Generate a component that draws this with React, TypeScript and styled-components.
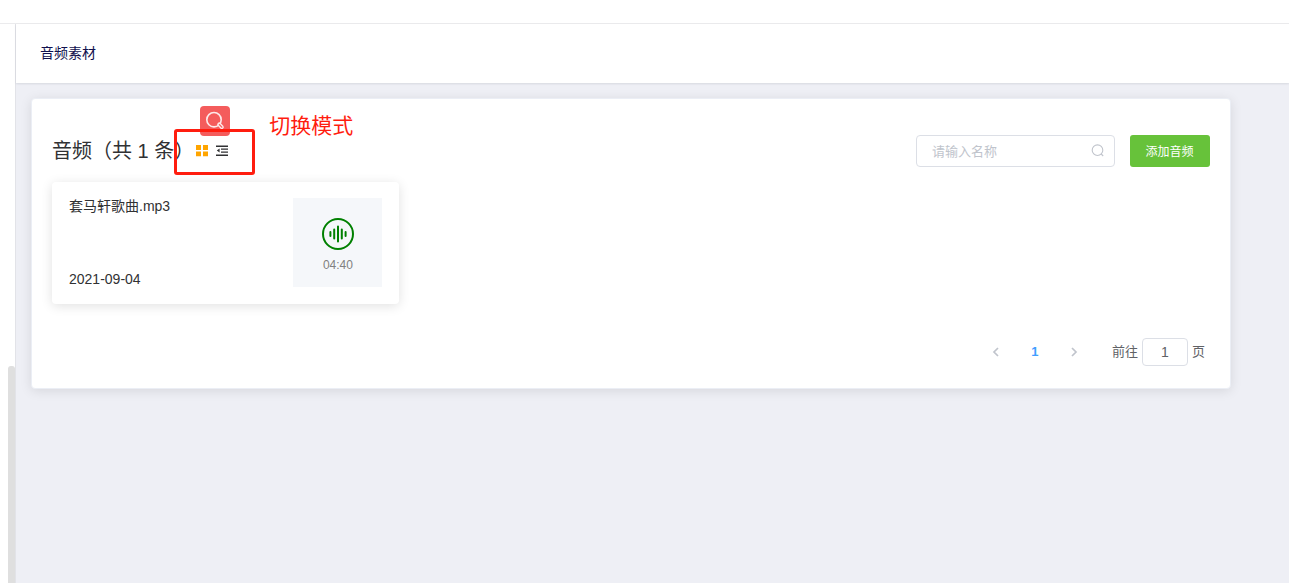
import React, { useState } from "react";
import styled, { createGlobalStyle } from "styled-components";

const GlobalStyle = createGlobalStyle`
  *, *::before, *::after { box-sizing: border-box; }
  body {
    margin: 0;
    background: #fff;
    color: #303133;
    font-family: "Liberation Sans", "Noto Sans CJK SC", sans-serif;
    font-size: 14px;
  }
  button, input { font-family: inherit; }
`;

const Page = styled.div`
  display: flex;
  flex-direction: column;
  min-height: 100vh;
`;

const TopBar = styled.div`
  height: 24px;
  border-bottom: 1px solid #ebebed;
`;

const Body = styled.div`
  display: flex;
  flex: 1;
`;

const Sidebar = styled.aside`
  display: flex;
  flex-direction: column;
  align-items: flex-end;
  width: 16px;
  padding-top: 342px;
  border-right: 1px solid #e2e3e8;
`;

const ScrollThumb = styled.div`
  flex: 1;
  width: 7px;
  border-radius: 3px 3px 0 0;
  background: #dfdfdf;
`;

const Main = styled.main`
  flex: 1;
  min-width: 0;
  background: #eeeff5;
`;

const PageHeader = styled.header`
  display: flex;
  height: 59px;
  padding: 19px 24px;
  background: #fff;
  box-shadow: 0 1px 2px rgba(0, 21, 41, 0.1);
`;

const PageTitle = styled.h1`
  margin: 0;
  font-size: 14px;
  line-height: 20px;
  font-weight: 400;
  color: #10104e;
`;

const Panel = styled.section`
  margin: 15px 58px 24px 15px;
  padding: 36px 20px 22px;
  border: 1px solid #ebeef5;
  border-radius: 4px;
  background: #fff;
  box-shadow: 0 2px 12px rgba(0, 0, 0, 0.1);
`;

const Toolbar = styled.div`
  display: flex;
  align-items: center;
  height: 32px;
`;

const Title = styled.h2`
  margin: 0;
  font-size: 20px;
  line-height: 32px;
  font-weight: 400;
  white-space: nowrap;
`;

const ModeSwitch = styled.div`
  position: relative;
  display: flex;
  gap: 6px;
  margin: 0 auto 0 2px;
`;

const ModeButton = styled.button<{ $active: boolean }>`
  display: flex;
  padding: 0;
  border: 0;
  background: none;
  color: ${(p) => (p.$active ? "#ffa500" : "#303133")};
  cursor: pointer;
`;

const Highlight = styled.div`
  position: absolute;
  left: -22px;
  top: -15px;
  width: 81px;
  height: 46px;
  border: 3px solid #ff1d0f;
  border-radius: 3px;
  pointer-events: none;
`;

const Badge = styled.div`
  position: absolute;
  left: 4px;
  top: -38px;
  width: 30px;
  height: 30px;
  border-radius: 4px;
  background: #f45c5c;
`;

const Note = styled.span`
  position: absolute;
  left: 73px;
  top: -33px;
  font-size: 21px;
  line-height: 30px;
  font-weight: 400;
  color: #ff1d0f;
  white-space: nowrap;
`;

const SearchBox = styled.label`
  display: flex;
  align-items: center;
  width: 199px;
  height: 32px;
  margin-right: 15px;
  padding: 0 9px 0 15px;
  border: 1px solid #dcdfe6;
  border-radius: 4px;
`;

const SearchInput = styled.input`
  flex: 1;
  min-width: 0;
  padding: 0;
  border: 0;
  outline: 0;
  background: none;
  font-size: 13px;
  color: #606266;
  &::placeholder { color: #c0c4cc; }
`;

const AddButton = styled.button`
  width: 80px;
  height: 32px;
  padding: 0 1px 1px 0;
  border: 0;
  border-radius: 3px;
  background: #67c23a;
  color: #fff;
  font-size: 12px;
  cursor: pointer;
`;

const CardList = styled.div`
  display: flex;
  margin-top: 15px;
`;

const AudioCard = styled.article`
  display: flex;
  justify-content: space-between;
  width: 30%;
  padding: 16px 17px 17px;
  border-radius: 4px;
  box-shadow: 0 2px 12px rgba(0, 0, 0, 0.12);
`;

const CardInfo = styled.div`
  display: flex;
  flex-direction: column;
  justify-content: space-between;
  line-height: 16px;
`;

const Preview = styled.div`
  display: flex;
  flex-direction: column;
  align-items: center;
  gap: 8px;
  width: 89px;
  height: 89px;
  padding-top: 20px;
  background: #f5f7fa;
  color: #808080;
  font-size: 12px;
  line-height: 14px;
`;

const Pagination = styled.nav`
  display: flex;
  align-items: center;
  justify-content: flex-end;
  margin-top: 34px;
  padding-right: 5px;
  font-size: 13px;
  color: #606266;
`;

const PageButton = styled.button<{ $current?: boolean }>`
  display: flex;
  align-items: center;
  justify-content: center;
  width: 39px;
  height: 28px;
  padding: 0 0 1px 1px;
  border: 0;
  background: none;
  color: ${(p) => (p.$current ? "#409eff" : "#c0c4cc")};
  font-size: 13px;
  font-weight: 700;
`;

const Jump = styled.label`
  display: flex;
  align-items: center;
  gap: 4px;
  margin-left: 19px;
  line-height: 20px;
`;

const JumpInput = styled.input`
  width: 46px;
  height: 28px;
  padding: 0;
  border: 1px solid #dcdfe6;
  border-radius: 4px;
  text-align: center;
  font-size: 14px;
  color: #606266;
`;

const GridIcon = () => (
  <svg width="14" height="14" viewBox="0 0 14 14" fill="currentColor" aria-hidden="true">
    <path d="M0 1h5v5H0zM7 1h5v5H7zM0 7.6h5v4.6H0zM7 7.6h5v4.6H7z" />
  </svg>
);

const ListIcon = () => (
  <svg width="14" height="14" viewBox="0 0 14 14" fill="currentColor" aria-hidden="true">
    <path d="M0 1.4h12v1.5H0zM5 4.4h7v1.4H5zM5 7.4h7v1.4H5zM0 10.5h12V12H0zM.8 6.6l2.8-2V8.6z" />
  </svg>
);

const MagnifierIcon = () => (
  <svg width="30" height="30" viewBox="0 0 30 30" fill="none" stroke="#fdeaea" strokeLinecap="round" aria-hidden="true">
    <circle cx="14" cy="13.7" r="7.2" strokeWidth="1.6" />
    <path d="M19.2 18.4l2.6 2.7" strokeWidth="4" />
    <path d="M19.4 18.6l2.4 2.5" stroke="#f45c5c" strokeWidth="1.3" />
  </svg>
);

const SearchIcon = () => (
  <svg width="14" height="14" viewBox="0 0 14 14" fill="none" stroke="#c0c4cc" strokeWidth="1.1" aria-hidden="true">
    <circle cx="6.5" cy="6.2" r="5.3" />
    <path d="M10.2 10l2 2" />
  </svg>
);

const WaveIcon = () => (
  <svg width="32" height="32" viewBox="0 0 32 32" fill="none" stroke="#008000" strokeWidth="2" aria-hidden="true">
    <circle cx="16" cy="16" r="15" />
    <path d="M8.4 14v4M12.2 11.4v9.2M16 8.4v15.2M19.8 11.4v9.2M23.6 14v4" strokeLinecap="round" />
  </svg>
);

const Chevron = ({ d }: { d: string }) => (
  <svg width="12" height="12" viewBox="0 0 12 12" fill="none" stroke="currentColor" strokeWidth="1.7" aria-hidden="true">
    <path d={d} />
  </svg>
);

const audios = [{ name: "套马轩歌曲.mp3", date: "2021-09-04", length: "04:40" }];

export default function App() {
  const [mode, setMode] = useState("grid");
  return (
    <>
      <GlobalStyle />
      <Page>
        <TopBar />
        <Body>
          <Sidebar>
            <ScrollThumb />
          </Sidebar>
          <Main>
            <PageHeader>
              <PageTitle>音频素材</PageTitle>
            </PageHeader>
            <Panel>
              <Toolbar>
                <Title>音频（共 {audios.length} 条）</Title>
                <ModeSwitch>
                  <ModeButton type="button" aria-label="grid" $active={mode === "grid"} onClick={() => setMode("grid")}>
                    <GridIcon />
                  </ModeButton>
                  <ModeButton type="button" aria-label="list" $active={mode === "list"} onClick={() => setMode("list")}>
                    <ListIcon />
                  </ModeButton>
                  <Badge>
                    <MagnifierIcon />
                  </Badge>
                  <Highlight />
                  <Note>切换模式</Note>
                </ModeSwitch>
                <SearchBox>
                  <SearchInput type="text" placeholder="请输入名称" aria-label="请输入名称" />
                  <SearchIcon />
                </SearchBox>
                <AddButton type="button">添加音频</AddButton>
              </Toolbar>
              <CardList>
                {audios.map((a) => (
                  <AudioCard key={a.name}>
                    <CardInfo>
                      <span>{a.name}</span>
                      <time>{a.date}</time>
                    </CardInfo>
                    <Preview>
                      <WaveIcon />
                      <span>{a.length}</span>
                    </Preview>
                  </AudioCard>
                ))}
              </CardList>
              <Pagination>
                <PageButton type="button" aria-label="prev">
                  <Chevron d="M8 2L4 6l4 4" />
                </PageButton>
                <PageButton type="button" $current>
                  1
                </PageButton>
                <PageButton type="button" aria-label="next">
                  <Chevron d="M4 2l4 4-4 4" />
                </PageButton>
                <Jump>
                  <span>前往</span>
                  <JumpInput type="text" defaultValue="1" />
                  <span>页</span>
                </Jump>
              </Pagination>
            </Panel>
          </Main>
        </Body>
      </Page>
    </>
  );
}
